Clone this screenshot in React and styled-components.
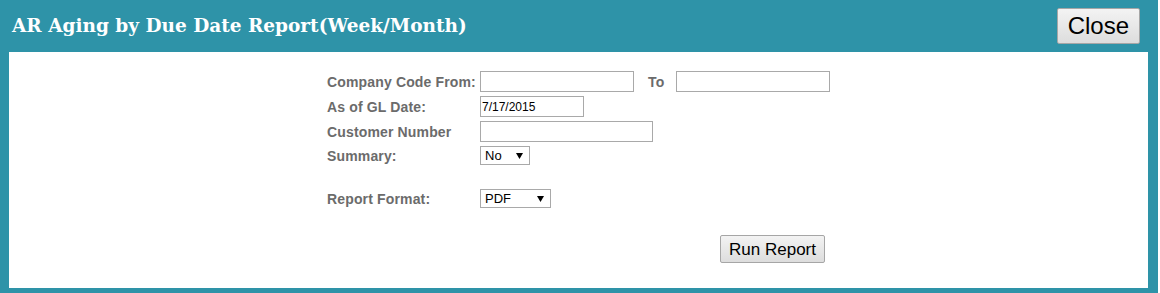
import React, { useState } from 'react';
import styled, { createGlobalStyle } from 'styled-components';

const GlobalStyle = createGlobalStyle`
  body {
    margin: 0;
    background: #ffffff;
    font-family: "Liberation Sans", Arial, sans-serif;
  }
`;

// dialog frame
const Dialog = styled.div`
  width: 1158px;
  height: 293px;
  background: #2e93a8;
  display: flex;
  flex-direction: column;
  box-sizing: border-box;
  padding: 0 10px 5px 9px;
`;

const Header = styled.div`
  height: 52px;
  display: flex;
  align-items: center;
  justify-content: space-between;
  padding: 0 8px 1px 3px;
  box-sizing: border-box;
`;

const Title = styled.h1`
  margin: 0;
  font-family: "DejaVu Serif", "Liberation Serif", serif;
  font-weight: bold;
  font-size: 18.5px;
  color: #ffffff;
`;

const Button = styled.button`
  font-family: "Liberation Sans", Arial, sans-serif;
  font-size: ${props => props.size}px;
  height: ${props => props.h}px;
  padding: 0 ${props => props.pad}px;
  color: #000;
  background: linear-gradient(180deg, #f3f3f3 0%, #e8e8e8 50%, #dddddd 100%);
  border: 1px solid #a6a6a6;
  border-radius: 2px;
  cursor: pointer;
  line-height: 1;
`;

const Panel = styled.div`
  flex: 1;
  background: #ffffff;
  padding-top: 19px;
  box-sizing: border-box;
`;

const Form = styled.div`
  width: 503px;
  margin: 0 auto;
  display: flex;
  flex-direction: column;
  gap: 4px;
`;

const Row = styled.div`
  display: flex;
  align-items: center;
  height: ${props => props.h || 21}px;
  margin-top: ${props => props.mt || 0}px;
`;

const Label = styled.label`
  width: ${props => props.w || 153}px;
  margin-left: ${props => props.ml || 0}px;
  margin-right: ${props => props.mr || 0}px;
  font-size: 14px;
  letter-spacing: 0.15px;
  font-weight: bold;
  color: #6b6b6b;
  white-space: nowrap;
`;

const Input = styled.input`
  width: ${props => props.w}px;
  height: 21px;
  box-sizing: border-box;
  border: 1px solid #a9a9a9;
  padding: 0 1px;
  font-family: "Liberation Sans", Arial, sans-serif;
  font-size: 12px;
  color: #000;
  outline: none;
`;

const SelectBox = styled.div`
  width: ${props => props.w}px;
  height: ${props => props.h}px;
  box-sizing: border-box;
  border: 1px solid #a9a9a9;
  display: flex;
  align-items: center;
  justify-content: space-between;
  padding: 0 6px 0 4px;
  font-size: 13px;
  color: #000;
  background: #fff;
`;

const Arrow = () => (
  <svg width="7" height="6" viewBox="0 0 7 6">
    <path d="M0 0 H7 L3.5 6 Z" fill="#000" />
  </svg>
);

const ButtonRow = styled.div`
  display: flex;
  justify-content: flex-end;
  padding-right: 5px;
  margin-top: 27px;
`;

const App = () => {
  const [asOf, setAsOf] = useState('7/17/2015');

  return (
    <>
      <GlobalStyle />
      <Dialog>
        <Header>
          <Title>AR Aging by Due Date Report(Week/Month)</Title>
          <Button size={24} h={36} pad={10}>Close</Button>
        </Header>
        <Panel>
          <Form>
            <Row>
              <Label>Company Code From:</Label>
              <Input w={154} />
              <Label w={16} ml={14} mr={12}>To</Label>
              <Input w={154} />
            </Row>
            <Row>
              <Label>As of GL Date:</Label>
              <Input w={104} value={asOf} onChange={e => setAsOf(e.target.value)} />
            </Row>
            <Row>
              <Label>Customer Number</Label>
              <Input w={173} />
            </Row>
            <Row h={19}>
              <Label>Summary:</Label>
              <SelectBox w={50} h={19}>
                <span>No</span>
                <Arrow />
              </SelectBox>
            </Row>
            <Row h={19} mt={20}>
              <Label>Report Format:</Label>
              <SelectBox w={71} h={19}>
                <span>PDF</span>
                <Arrow />
              </SelectBox>
            </Row>
          </Form>
          <Form>
            <ButtonRow>
              <Button size={17} h={28} pad={8}>Run Report</Button>
            </ButtonRow>
          </Form>
        </Panel>
      </Dialog>
    </>
  );
};

export default App;
